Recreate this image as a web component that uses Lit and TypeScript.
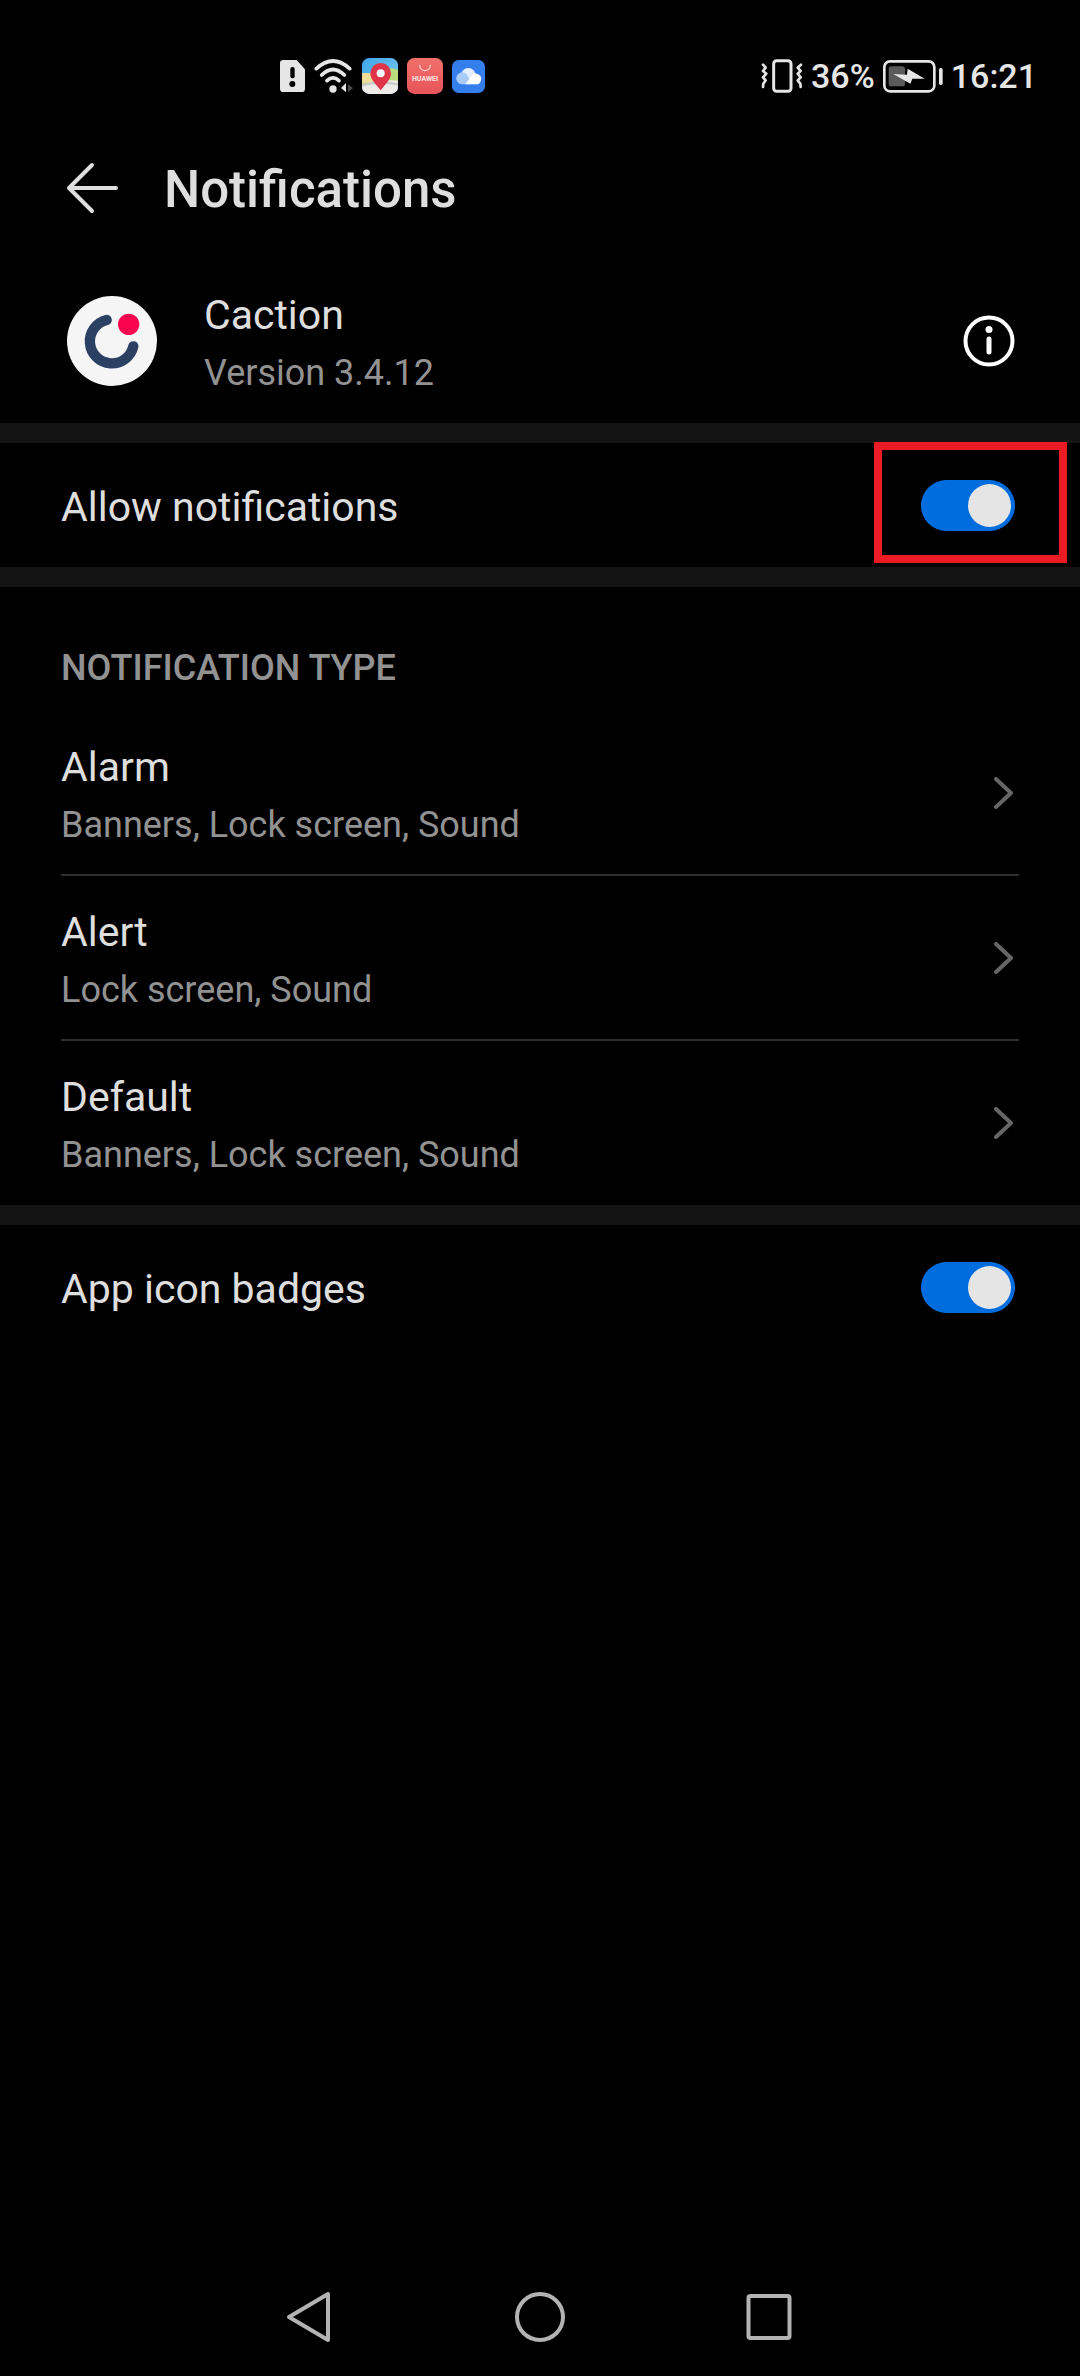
import { LitElement, html, css, svg, nothing } from "lit";
import { customElement, property, state } from "lit/decorators.js";

const simIcon = html`<svg width="25" height="32" viewBox="0 0 75 96" role="img" aria-label="SIM alert">
  <path d="M10 0H50L75 28V86a10 10 0 0 1-10 10H10a10 10 0 0 1-10-10V10A10 10 0 0 1 10 0Z" fill="#e6e6e6" />
  <rect x="31" y="21" width="13" height="34" rx="6" fill="#000" />
  <circle cx="37" cy="72" r="9" fill="#000" />
</svg>`;

const wifiIcon = html`<svg width="39" height="34" viewBox="0 0 117 102" role="img" aria-label="Wi-Fi">
  <g fill="none" stroke="#e6e6e6" stroke-width="11" stroke-linecap="round">
    <path d="M7 29Q57 -17 107 29" />
    <path d="M23 48Q57 15 91 48" />
    <path d="M39 65Q57 48 75 65" />
  </g>
  <circle cx="57" cy="90" r="11" fill="#e6e6e6" />
  <path d="M96 72V100L81 87Z" fill="#e6e6e6" />
  <path d="M102 76V100L117 87Z" fill="#4a4a4a" />
</svg>`;

const mapIcon = html`<svg width="36" height="36" viewBox="0 0 108 108" role="img" aria-label="Maps">
  <defs>
    <linearGradient id="sky" x1="0" y1="0" x2="1" y2="1">
      <stop offset="0" stop-color="#3fa4ea" /><stop offset="1" stop-color="#7fd0e8" />
    </linearGradient>
    <clipPath id="tile"><rect width="108" height="108" rx="22" /></clipPath>
  </defs>
  <g clip-path="url(#tile)">
    <rect width="108" height="108" fill="url(#sky)" />
    <path d="M0 50Q30 42 60 38Q85 24 108 36V80H0Z" fill="#b9dc7c" />
    <path d="M0 46Q20 42 40 52V74H0Z" fill="#f0dd98" />
    <path d="M0 80Q50 60 108 68V108H0Z" fill="#eeebe8" />
    <path d="M0 78Q50 62 108 76V83Q50 70 0 86Z" fill="#c9cccd" />
    <path d="M56 97C44 80 25 66 25 46a31 31 0 0 1 62 0C87 66 68 80 56 97Z" fill="#e03448" />
    <circle cx="56" cy="46" r="12" fill="#fff" />
  </g>
</svg>`;

const galleryIcon = html`<svg width="36" height="36" viewBox="0 0 108 108" role="img" aria-label="AppGallery">
  <defs>
    <linearGradient id="coral" x1="0" y1="0" x2="0" y2="1">
      <stop offset="0" stop-color="#f0706a" /><stop offset="1" stop-color="#e8545a" />
    </linearGradient>
  </defs>
  <rect width="108" height="108" rx="22" fill="url(#coral)" />
  <path d="M38 22a16 16 0 0 0 32 0" fill="none" stroke="#ffc9c0" stroke-width="4" stroke-linecap="round" />
  <text x="54" y="70" text-anchor="middle" font-family="Roboto, sans-serif" font-weight="700" font-size="21" fill="#ffe4e0">HUAWEI</text>
</svg>`;

const cloudIcon = html`<svg width="33" height="33" viewBox="0 0 99 99" role="img" aria-label="Cloud">
  <rect width="99" height="99" rx="20" fill="#347fec" />
  <circle cx="49" cy="46" r="22" fill="#e3eefe" />
  <path d="M30 73a18 18 0 1 1 13-31L62 73Z" fill="#a9cbfa" />
  <path d="M40 73 57 50a16 16 0 1 1 13 23Z" fill="#fff" />
</svg>`;

const vibrateIcon = html`<svg width="42" height="34" viewBox="0 0 126 102" role="img" aria-label="Vibrate">
  <rect x="38" y="5" width="52" height="92" rx="9" fill="none" stroke="#e6e6e6" stroke-width="9" />
  <g fill="none" stroke="#e6e6e6" stroke-width="8" stroke-linecap="round" stroke-linejoin="round">
    <path d="M6 17 14 26 6 36 16 44 6 55 14 64 7 74 6 84" />
    <path d="M120 17 110 26 119 36 110 44 119 55 110 64 118 74 119 84" />
  </g>
</svg>`;

const batteryIcon = html`<svg width="60" height="33" viewBox="0 0 180 99" role="img" aria-label="Battery charging">
  <rect x="4" y="4" width="150" height="90" rx="17" fill="none" stroke="#e6e6e6" stroke-width="8" />
  <rect x="17" y="19" width="49" height="60" rx="8" fill="#5a5a5a" />
  <path d="M31 42 72 44 74 26 125 56 88 56 82 71Z" fill="#e6e6e6" />
  <rect x="168" y="24" width="11" height="51" rx="5" fill="#e6e6e6" />
</svg>`;

const backArrow = svg`<path d="M27 4 4 27 27 50M4 27H51" fill="none" stroke="#dedede" stroke-width="4" stroke-linecap="round" stroke-linejoin="round" />`;

@customElement("toggle-row")
class ToggleRow extends LitElement {
  @property() label = "";
  @property({ type: Boolean }) marked = false;
  @state() private on = true;

  static styles = css`
    :host { display: block; }
    .row {
      display: flex;
      align-items: center;
      justify-content: space-between;
      min-height: 124px;
      padding: 0 65px 0 61px;
      color: #dedede;
      font-size: 41px;
      line-height: 64px;
    }
    .label { padding-top: 4px; }
    .control { position: relative; display: flex; }
    .switch {
      appearance: none;
      display: flex;
      align-items: center;
      box-sizing: border-box;
      width: 94px;
      height: 51px;
      margin: 0;
      padding: 4px;
      border-radius: 26px;
      background: #4d4d4d;
    }
    .switch::before {
      content: "";
      width: 43px;
      height: 43px;
      border-radius: 50%;
      background: #e5e5e5;
    }
    .switch:checked { justify-content: flex-end; background: #006ddf; }
    .mark {
      position: absolute;
      inset: -38px -52px -32px -47px;
      border: 8px solid #ed1c24;
      pointer-events: none;
    }
  `;

  render() {
    return html`<label class="row">
      <span class="label">${this.label}</span>
      <span class="control">
        <input class="switch" type="checkbox" role="switch" .checked=${this.on}
          @change=${(e: Event) => (this.on = (e.target as HTMLInputElement).checked)} />
        ${this.marked ? html`<span class="mark"></span>` : nothing}
      </span>
    </label>`;
  }
}

@customElement("app-root")
class AppRoot extends LitElement {
  private types = [
    { name: "Alarm", detail: "Banners, Lock screen, Sound" },
    { name: "Alert", detail: "Lock screen, Sound" },
    { name: "Default", detail: "Banners, Lock screen, Sound" },
  ];

  static styles = css`
    :host {
      display: flex;
      flex-direction: column;
      min-height: 100vh;
      background: #000;
      color: #dedede;
      font-family: Roboto, "Noto Sans", sans-serif;
    }
    svg { display: block; flex: none; }
    button { padding: 0; border: 0; background: none; color: inherit; font: inherit; }
    .status {
      display: flex;
      align-items: center;
      justify-content: space-between;
      padding: 34px 43px 0 280px;
      min-height: 84px;
      color: #e6e6e6;
      font-size: 34px;
      font-weight: 500;
      line-height: 40px;
    }
    .group { display: flex; align-items: center; gap: 9px; }
    .system { gap: 8px; }
    .header {
      display: flex;
      align-items: center;
      gap: 45px;
      min-height: 140px;
      padding: 0 65px;
    }
    h1 { margin: 0; padding-top: 4px; font-size: 51px; font-weight: 500; line-height: 64px; }
    .app {
      display: flex;
      align-items: center;
      min-height: 165px;
      padding: 0 65px 0 67px;
    }
    .text { flex: 1; }
    .app .text { padding-left: 47px; }
    .name { font-size: 41px; line-height: 64px; }
    .detail { color: #929292; font-size: 36px; line-height: 52px; }
    .band { height: 20px; background: #141414; }
    h2 {
      margin: 0;
      padding: 55px 61px 17px;
      color: #929292;
      font-size: 36px;
      font-weight: 500;
      line-height: 52px;
    }
    ul { margin: 0; padding: 0 61px 1px; list-style: none; }
    li + li { border-top: 2px solid #2f2f2f; }
    .type {
      display: flex;
      align-items: center;
      min-height: 163px;
      padding-right: 6px;
      color: inherit;
      text-decoration: none;
    }
    .nav {
      display: flex;
      justify-content: center;
      gap: 176px;
      margin-top: auto;
      padding-bottom: 32px;
    }
  `;

  render() {
    return html`
      <div class="status">
        <div class="group">${simIcon}${wifiIcon}${mapIcon}${galleryIcon}${cloudIcon}</div>
        <div class="group system">
          ${vibrateIcon}<span>36%</span>${batteryIcon}<span>16:21</span>
        </div>
      </div>
      <header class="header">
        <button aria-label="Back"><svg width="54" height="54" viewBox="0 0 54 54">${backArrow}</svg></button>
        <h1>Notifications</h1>
      </header>
      <main>
        <section class="app">
          <svg width="90" height="90" viewBox="0 0 270 270" aria-hidden="true">
            <circle cx="135" cy="135" r="135" fill="#f5f5f5" />
            <path d="M119 72A66 66 0 1 0 199 151" fill="none" stroke="#2a4163" stroke-width="31" stroke-linecap="round" />
            <circle cx="185" cy="85" r="32" fill="#fa0450" />
          </svg>
          <div class="text">
            <div class="name">Caction</div>
            <div class="detail">Version 3.4.12</div>
          </div>
          <button aria-label="App info">
            <svg width="52" height="52" viewBox="0 0 52 52">
              <circle cx="26" cy="26" r="23.5" fill="none" stroke="#fff" stroke-width="4" />
              <circle cx="26" cy="14.5" r="3.5" fill="#fff" />
              <path d="M26 24V37" stroke="#fff" stroke-width="5" stroke-linecap="round" />
            </svg>
          </button>
        </section>
        <div class="band"></div>
        <toggle-row label="Allow notifications" marked></toggle-row>
        <div class="band"></div>
        <section>
          <h2>NOTIFICATION TYPE</h2>
          <ul>
            ${this.types.map(
              (t) => html`<li>
                <a class="type" href="#">
                  <div class="text">
                    <div class="name">${t.name}</div>
                    <div class="detail">${t.detail}</div>
                  </div>
                  <svg width="20" height="32" viewBox="0 0 20 32" aria-hidden="true">
                    <path d="M3 2 18 16 3 30" fill="none" stroke="#666" stroke-width="4" stroke-linecap="round" stroke-linejoin="round" />
                  </svg>
                </a>
              </li>`
            )}
          </ul>
        </section>
        <div class="band"></div>
        <toggle-row label="App icon badges"></toggle-row>
      </main>
      <nav class="nav" aria-label="System navigation">
        <button aria-label="Back">
          <svg width="54" height="54" viewBox="0 0 54 54">
            <path d="M45 4V50L6 27Z" fill="none" stroke="#b3b3b3" stroke-width="4" stroke-linejoin="round" />
          </svg>
        </button>
        <button aria-label="Home">
          <svg width="54" height="54" viewBox="0 0 54 54">
            <circle cx="27" cy="27" r="23" fill="none" stroke="#b3b3b3" stroke-width="4" />
          </svg>
        </button>
        <button aria-label="Recent apps">
          <svg width="54" height="54" viewBox="0 0 54 54">
            <rect x="5.5" y="6" width="41" height="42" rx="2" fill="none" stroke="#b3b3b3" stroke-width="4" />
          </svg>
        </button>
      </nav>
    `;
  }
}
